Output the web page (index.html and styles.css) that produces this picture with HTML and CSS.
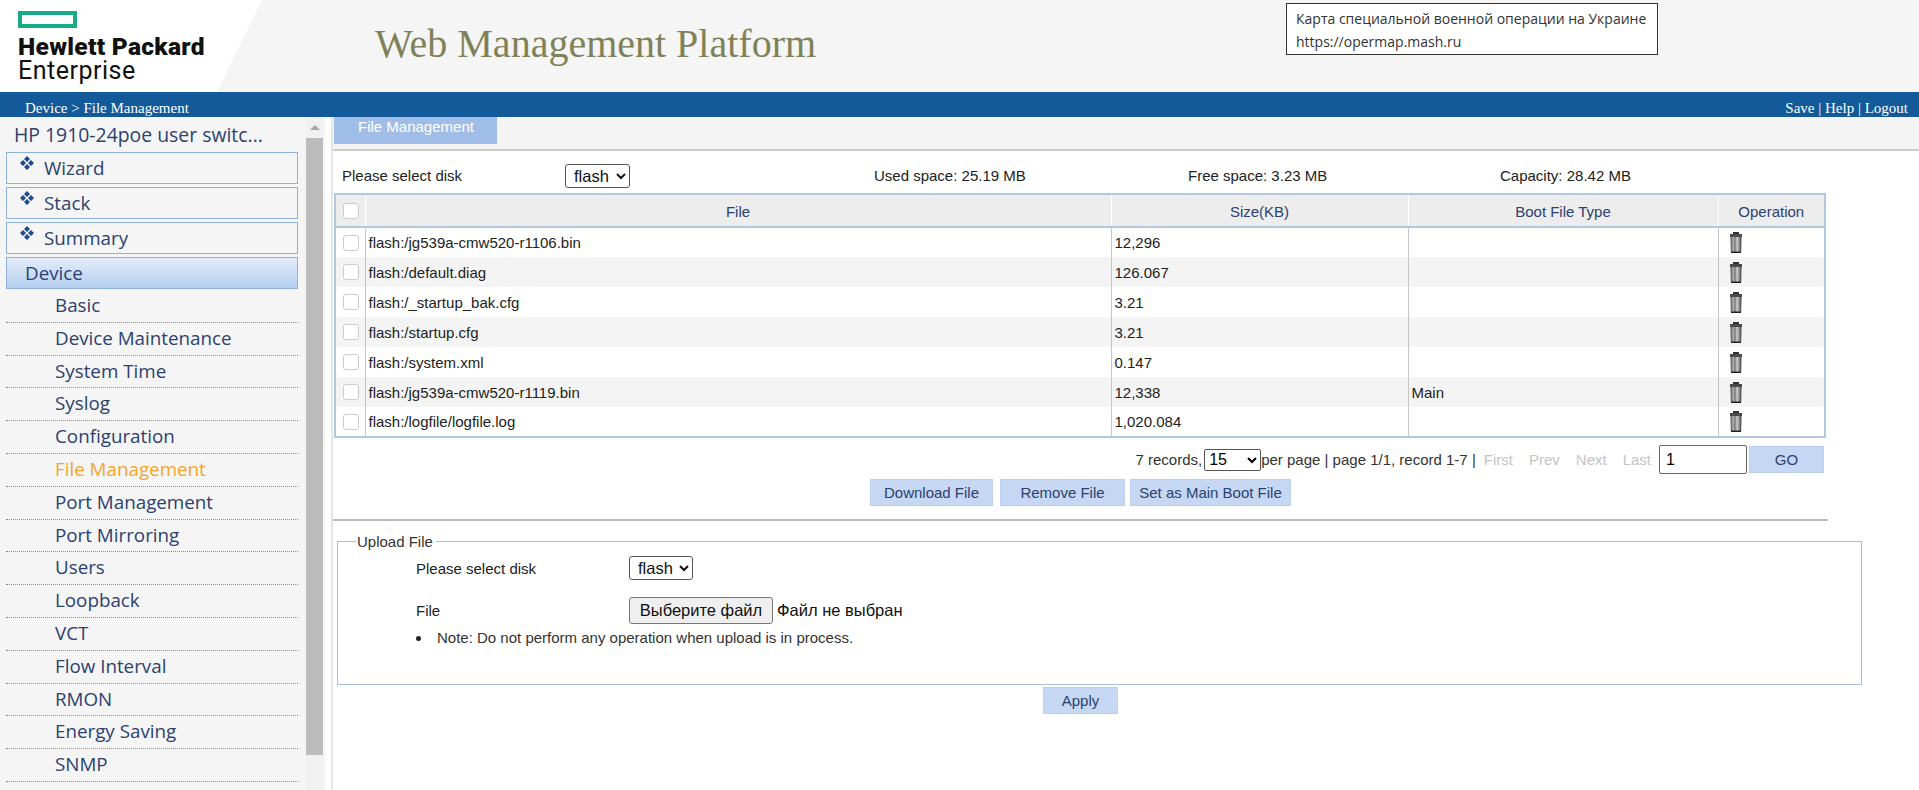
FILE: index.html
```html
<!doctype html>
<html lang="en">
	<head>
		<meta charset="UTF-8" />
		<title>Web Management Platform</title>
		<link rel="stylesheet" href="styles.css">
	</head>
	<body>
		<header class="top">
			<div class="logo">
				<span class="logo-mark"></span>
				<p class="logo-hp">Hewlett Packard</p>
				<p class="logo-ent">Enterprise</p>
			</div>
			<h1 class="title">Web Management Platform</h1>
			<div class="notice">
				<p>Карта специальной военной операции на Украине</p>
				<p>https://opermap.mash.ru</p>
			</div>
		</header>
		<div class="bar">
			<span class="crumb">Device &gt; File Management</span>
			<span class="bar-links">Save | Help | Logout</span>
		</div>
		<section class="main">
			<aside class="side">
				<div class="menu">
					<p class="device-name">HP 1910-24poe user switc...</p>
					<a href="javascript:;" class="group"><svg class="diamonds" viewBox="0 0 14 14"><path d="M7 0l3 3-3 3-3-3zM3 4l3 3-3 3-3-3zM11 4l3 3-3 3-3-3zM7 8l3 3-3 3-3-3z"/></svg>Wizard</a>
					<a href="javascript:;" class="group"><svg class="diamonds" viewBox="0 0 14 14"><path d="M7 0l3 3-3 3-3-3zM3 4l3 3-3 3-3-3zM11 4l3 3-3 3-3-3zM7 8l3 3-3 3-3-3z"/></svg>Stack</a>
					<a href="javascript:;" class="group"><svg class="diamonds" viewBox="0 0 14 14"><path d="M7 0l3 3-3 3-3-3zM3 4l3 3-3 3-3-3zM11 4l3 3-3 3-3-3zM7 8l3 3-3 3-3-3z"/></svg>Summary</a>
					<a href="javascript:;" class="group open">Device</a>
					<ul class="sub">
						<li>Basic</li>
						<li>Device Maintenance</li>
						<li>System Time</li>
						<li>Syslog</li>
						<li>Configuration</li>
						<li class="active">File Management</li>
						<li>Port Management</li>
						<li>Port Mirroring</li>
						<li>Users</li>
						<li>Loopback</li>
						<li>VCT</li>
						<li>Flow Interval</li>
						<li>RMON</li>
						<li>Energy Saving</li>
						<li>SNMP</li>
						<li>Interface Statistics</li>
					</ul>
				</div>
				<div class="scroll">
					<span class="scroll-up"></span>
					<span class="scroll-thumb"></span>
				</div>
			</aside>
			<div class="content">
				<div class="tabs"><a href="javascript:;" class="tab">File Management</a></div>
				<div class="disk-row">
					<span class="disk-label">Please select disk</span>
					<select class="disk-select"><option>flash</option></select>
					<span class="used">Used space: 25.19 MB</span>
					<span class="free">Free space: 3.23 MB</span>
					<span class="cap">Capacity: 28.42 MB</span>
				</div>
				<table class="files">
					<thead>
						<tr>
							<th class="c-check"><input type="checkbox"></th>
							<th class="c-file">File</th>
							<th class="c-size">Size(KB)</th>
							<th class="c-boot">Boot File Type</th>
							<th class="c-op">Operation</th>
						</tr>
					</thead>
					<tbody>
						<tr>
							<td class="c-check"><input type="checkbox"></td>
							<td>flash:/jg539a-cmw520-r1106.bin</td>
							<td>12,296</td>
							<td></td>
							<td><svg class="trash"><use href="#trash"/></svg></td>
						</tr>
						<tr>
							<td class="c-check"><input type="checkbox"></td>
							<td>flash:/default.diag</td>
							<td>126.067</td>
							<td></td>
							<td><svg class="trash"><use href="#trash"/></svg></td>
						</tr>
						<tr>
							<td class="c-check"><input type="checkbox"></td>
							<td>flash:/_startup_bak.cfg</td>
							<td>3.21</td>
							<td></td>
							<td><svg class="trash"><use href="#trash"/></svg></td>
						</tr>
						<tr>
							<td class="c-check"><input type="checkbox"></td>
							<td>flash:/startup.cfg</td>
							<td>3.21</td>
							<td></td>
							<td><svg class="trash"><use href="#trash"/></svg></td>
						</tr>
						<tr>
							<td class="c-check"><input type="checkbox"></td>
							<td>flash:/system.xml</td>
							<td>0.147</td>
							<td></td>
							<td><svg class="trash"><use href="#trash"/></svg></td>
						</tr>
						<tr>
							<td class="c-check"><input type="checkbox"></td>
							<td>flash:/jg539a-cmw520-r1119.bin</td>
							<td>12,338</td>
							<td>Main</td>
							<td><svg class="trash"><use href="#trash"/></svg></td>
						</tr>
						<tr>
							<td class="c-check"><input type="checkbox"></td>
							<td>flash:/logfile/logfile.log</td>
							<td>1,020.084</td>
							<td></td>
							<td><svg class="trash"><use href="#trash"/></svg></td>
						</tr>
					</tbody>
				</table>
				<div class="pager">
					<span>7 records,</span>
					<select class="page-size"><option>15</option></select>
					<span>per page | page 1/1, record 1-7 |</span>
					<span class="off first">First</span>
					<span class="off">Prev</span>
					<span class="off">Next</span>
					<span class="off">Last</span>
					<input class="page-input" type="text" value="1">
					<button class="btn go">GO</button>
				</div>
				<div class="actions">
					<button class="btn dl">Download File</button>
					<button class="btn rm">Remove File</button>
					<button class="btn boot">Set as Main Boot File</button>
				</div>
				<hr class="rule">
				<fieldset class="upload">
					<legend>Upload File</legend>
					<div class="form-row first-row">
						<span class="form-label">Please select disk</span>
						<select class="disk-select"><option>flash</option></select>
					</div>
					<div class="form-row file-row">
						<span class="form-label">File</span>
						<button class="file-btn">Выберите файл</button>
						<span class="file-none">Файл не выбран</span>
					</div>
					<ul class="note"><li>Note: Do not perform any operation when upload is in process.</li></ul>
				</fieldset>
				<div class="apply-row"><button class="btn apply">Apply</button></div>
			</div>
		</section>
		<svg class="defs" width="0" height="0">
			<defs>
				<linearGradient id="can">
					<stop offset="0" stop-color="#4a4a4a"/>
					<stop offset=".25" stop-color="#b4b4b4"/>
					<stop offset=".4" stop-color="#777"/>
					<stop offset=".6" stop-color="#cfcfcf"/>
					<stop offset=".8" stop-color="#888"/>
					<stop offset="1" stop-color="#3a3a3a"/>
				</linearGradient>
				<symbol id="trash" viewBox="0 0 14 21">
					<path d="M4 0h6v2H4z" fill="#333"/>
					<path d="M1 2h12v3H1z" fill="#4a4a4a"/>
					<path d="M1.500 5h11l-.3 15H1.800z" fill="url(#can)"/>
					<path d="M2 19.500h10V21H2z" fill="#222"/>
				</symbol>
			</defs>
		</svg>
	</body>
</html>
```

FILE: styles.css
```css
*{
	margin: 0;
	padding: 0;
	box-sizing: border-box;
}
html,body{
	height: 790px;
	overflow: hidden;
}
body{
	font-family: "Liberation Sans", Arial, sans-serif;
	font-size: 15px;
	color: #222;
	background: #fff;
}
.defs{
	display: block;
}

/* header */
.top{
	display: flex;
	height: 92px;
	background: #f5f5f5;
}
.logo{
	width: 262px;
	height: 92px;
	padding: 11px 0 0 18px;
	background: #fff;
	clip-path: polygon(0 0, 100% 0, 217px 100%, 0 100%);
	color: #111;
}
.logo-mark{
	display: block;
	width: 59px;
	height: 17px;
	border: 4px solid #17ab87;
	margin-bottom: 7px;
}
.logo-hp{
	font: 900 24.500px/24px Roboto, sans-serif;
	letter-spacing: .3px;
}
.logo-ent{
	font: 400 25px/24px Roboto, sans-serif;
	letter-spacing: .5px;
}
.title{
	width: 649px;
	margin: 21px 0 0 113px;
	font: 400 40px/46px "Liberation Serif", serif;
	color: #7f8259;
}
.notice{
	width: 372px;
	height: 52px;
	margin-top: 3px;
	margin-left: 262px;
	padding: 3px 9px;
	background: #fff;
	border: 1px solid #333;
	font: 14px/23px "Open Sans", sans-serif;
	color: #333;
}
.bar{
	display: flex;
	justify-content: space-between;
	height: 25px;
	padding: 5px 11px 0 25px;
	background: #135a9b;
	color: #fff;
	font: 15px/22px "Liberation Serif", serif;
}

/* left menu */
.main{
	display: flex;
	height: 673px;
}
.side{
	display: flex;
	width: 325px;
	flex: none;
	background: #f5f5f5;
	overflow: hidden;
}
.menu{
	width: 306px;
	flex: none;
	padding-left: 6px;
	font-family: "Open Sans", sans-serif;
	color: #2c4170;
}
.device-name{
	margin-left: 8px;
	font-size: 19.400px;
	line-height: 35px;
	white-space: nowrap;
}
.group{
	display: flex;
	align-items: center;
	height: 32px;
	width: 292px;
	margin-bottom: 3px;
	padding-left: 13px;
	border: 1px solid #8fb2dc;
	font-size: 18.800px;
	color: #2c4170;
	text-decoration: none;
}
.diamonds{
	width: 14px;
	height: 14px;
	margin: -10px 10px 0 0;
	fill: #1f4a8e;
}
.group.open{
	padding-left: 18px;
	background: linear-gradient(#e3edfa, #b5cff0);
}
.sub{
	list-style: none;
	width: 292px;
	margin-top: -2px;
}
.sub li{
	height: 32.800px;
	padding-left: 49px;
	border-bottom: 1px dotted #888;
	font-size: 18.800px;
	line-height: 31px;
	white-space: nowrap;
}
.sub li.active{
	color: #f6a52c;
}
.scroll{
	width: 17px;
	flex: none;
	padding-top: 8px;
	background: #f1f1f1;
}
.scroll-up{
	display: block;
	width: 0;
	margin: 0 auto 8px;
	border: 5px solid transparent;
	border-top: 0;
	border-bottom: 5px solid #a5a5a5;
}
.scroll-thumb{
	display: block;
	height: 617px;
	background: #bcbcbc;
}

/* right side */
.content{
	flex: 1;
	margin-left: 6px;
	border-left: 2px solid #e6e6e0;
}
.tabs{
	height: 34px;
	padding-left: 1px;
	background: #f4f4f4;
	border-bottom: 2px solid #ccc;
}
.tab{
	display: block;
	width: 163px;
	height: 27px;
	padding-left: 24px;
	background: #a0bde8;
	color: #fff;
	line-height: 20px;
	text-decoration: none;
}
.disk-row{
	display: flex;
	align-items: center;
	height: 42px;
	padding-top: 7px;
}
.disk-label{
	width: 223px;
	margin-left: 9px;
}
.disk-select{
	width: 65px;
	height: 24px;
	padding-left: 4px;
	border: 1px solid #555;
	border-radius: 3px;
	background: #fff;
	font: 16.500px "Liberation Sans", sans-serif;
	color: #111;
}
.used{
	width: 314px;
	margin-left: 244px;
}
.free{
	width: 312px;
}
.files{
	width: 1492px;
	margin-left: 1px;
	table-layout: fixed;
	border-collapse: collapse;
	border: 2px solid #b4c7e0;
}
.files th{
	height: 33px;
	padding-top: 2px;
	background: #ededed;
	border-bottom: 2px solid #b4c7e0;
	border-left: 1px solid #fff;
	font-weight: 400;
	color: #2c4170;
}
.files td{
	height: 30px;
	padding-left: 3px;
	border-left: 1px solid #c6c6c6;
}
.files td:first-child,.files th:first-child{
	border-left: 0;
}
.files tbody tr:nth-child(even){
	background: #f4f4f4;
}
.files .c-check{
	width: 30px;
	padding: 0 0 0 7px;
	text-align: left;
}
.files th.c-check{
	border-right: 1px solid #fff;
}
.c-file{
	width: 746px;
}
.c-size{
	width: 297px;
}
.c-boot{
	width: 310px;
}
.files input{
	display: block;
	width: 16px;
	height: 16px;
	appearance: none;
	background: #fff;
	border: 1px solid #ccc;
	border-radius: 3px;
}
.trash{
	display: block;
	width: 14px;
	height: 21px;
	margin-left: 7px;
}
.pager{
	display: flex;
	align-items: center;
	justify-content: flex-end;
	width: 1491px;
	height: 35px;
	padding-top: 8px;
	color: #333;
}
.page-size{
	width: 57px;
	height: 22px;
	margin: 0 0 0 2px;
	border: 1px solid #555;
	border-radius: 2px;
	background: #fff;
	font: 16px "Liberation Sans", sans-serif;
}
.off{
	margin-left: 16px;
	color: #c4c4c4;
}
.off.first{
	margin-left: 8px;
}
.page-input{
	width: 88px;
	height: 29px;
	margin: 0 2px 0 8px;
	padding-left: 6px;
	border: 1px solid #666;
	border-radius: 2px;
	font: 16px "Liberation Sans", sans-serif;
}
.btn{
	height: 27px;
	border: 1px solid #bcd0ec;
	background: #c5d7f2;
	color: #2c4170;
	font: 15px "Liberation Sans", sans-serif;
}
.go{
	width: 75px;
}
.actions{
	display: flex;
	width: 1493px;
	padding-left: 537px;
	margin-top: 6px;
}
.dl{
	width: 123px;
	margin-right: 7px;
}
.rm{
	width: 125px;
	margin-right: 5px;
}
.boot{
	width: 161px;
}
.rule{
	width: 1495px;
	height: 2px;
	margin-top: 13px;
	border: 0;
	background: #bbb;
}
.upload{
	width: 1525px;
	height: 152px;
	margin: 12px 0 0 4px;
	padding: 0 0 0 78px;
	border: 1px solid #a9c0dc;
}
.upload legend{
	margin-left: -60px;
	padding: 0 3px 0 1px;
	color: #333;
}
.upload .disk-select{
	width: 64px;
}
.form-row{
	display: flex;
	align-items: center;
}
.form-label{
	width: 213px;
}
.first-row{
	height: 36px;
}
.file-row{
	height: 31px;
	margin-top: 9px;
}
.file-btn{
	width: 144px;
	height: 27px;
	border: 1px solid #767676;
	border-radius: 3px;
	background: #efefef;
	font: 16.500px "Liberation Sans", sans-serif;
	color: #111;
}
.file-none{
	margin-left: 4px;
	font-size: 16.500px;
	color: #111;
}
.note{
	margin-top: 2px;
	list-style: none;
	line-height: 20px;
	color: #333;
}
.note li{
	display: flex;
	align-items: center;
	gap: 16px;
}
.note li::before{
	content: "";
	width: 5px;
	height: 5px;
	border-radius: 50%;
	background: #222;
}
.apply-row{
	width: 1525px;
	margin-left: 3px;
	padding: 2px 0 0 707px;
}
.apply{
	width: 75px;
}
```
